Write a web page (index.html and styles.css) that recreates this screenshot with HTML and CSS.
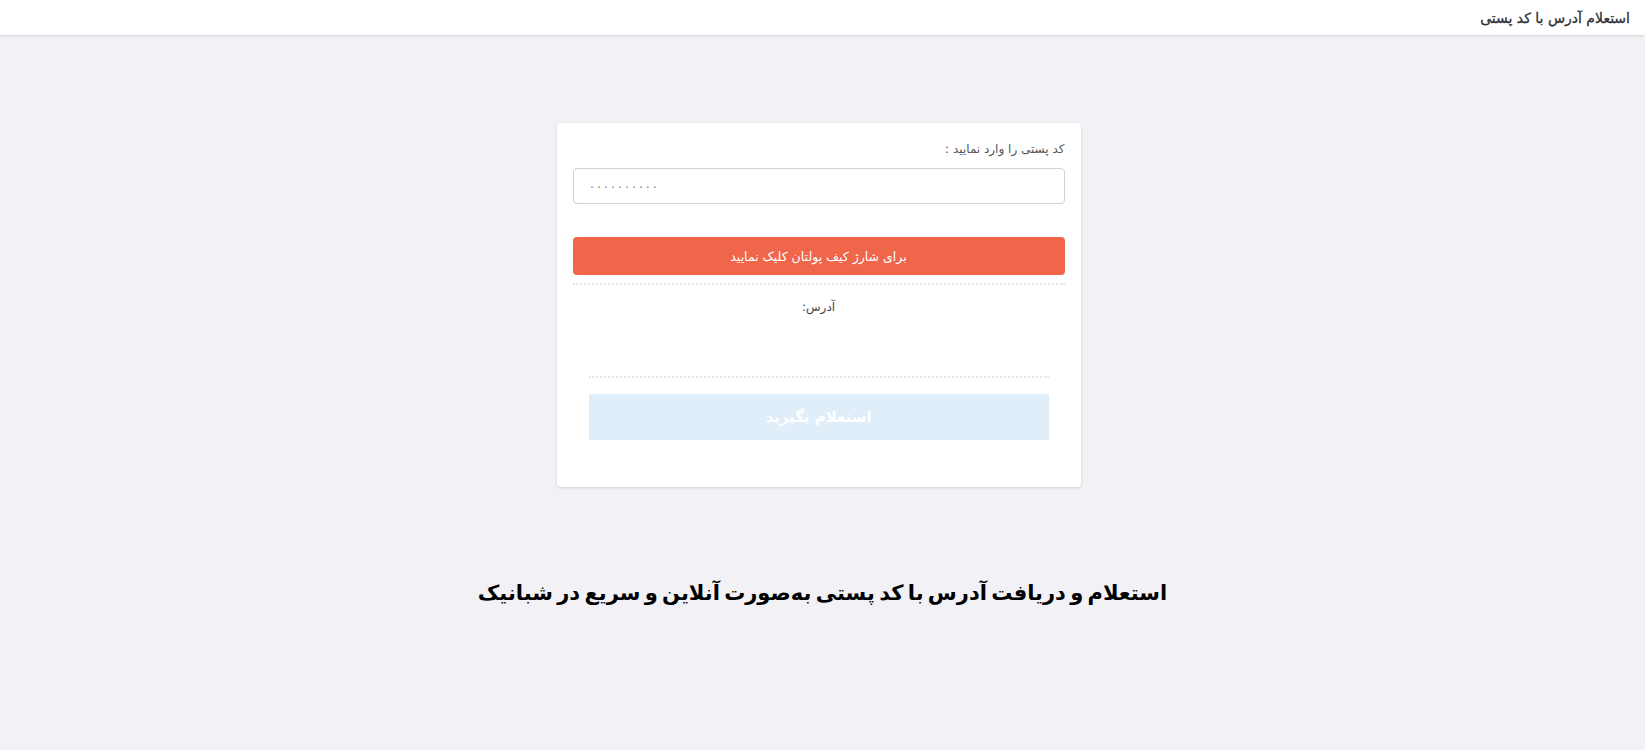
FILE: index.html
```html
<!DOCTYPE html>
<html lang="fa" dir="rtl">
<head>
<meta charset="utf-8">
<title>استعلام آدرس با کد پستی</title>
<link rel="stylesheet" href="styles.css">
</head>
<body>
<header class="topbar">
  <h1 class="topbar-title">استعلام آدرس با کد پستی</h1>
</header>
<main class="page">
  <div class="card-wrap">
    <section class="card">
      <label class="field-label" for="postcode">کد پستی را وارد نمایید :</label>
      <input class="field-input" id="postcode" type="text" placeholder="۰۰۰۰۰۰۰۰۰۰">
      <button class="btn-charge" type="button">برای شارژ کیف پولتان کلیک نمایید</button>
      <div class="result">
        <div class="result-label">آدرس:</div>
        <div class="result-body"></div>
        <div class="result-footer">
          <button class="btn-inquiry" type="button">استعلام بگیرید</button>
        </div>
      </div>
    </section>
  </div>
  <h2 class="page-heading">استعلام و دریافت آدرس با کد پستی به‌صورت آنلاین و سریع در شبانیک</h2>
</main>
</body>
</html>
```
FILE: styles.css
```css
html, body {
  margin: 0;
  padding: 0;
}
body {
  background: #f1f1f6;
  font-family: "DejaVu Sans", "Noto Sans", sans-serif;
  direction: rtl;
  color: #333;
  height: 750px;
  overflow: hidden;
}
.topbar {
  height: 35px;
  background: #ffffff;
  box-shadow: 0 1px 3px rgba(0, 0, 0, 0.12);
  display: flex;
  align-items: center;
  padding: 0 15px;
}
.topbar-title {
  margin: 0;
  font-size: 14px;
  font-weight: normal;
  color: #2f2f35;
  -webkit-text-stroke: 0.3px #2f2f35;
}
.page {
  padding-top: 88px;
}
.card-wrap {
  display: flex;
  justify-content: center;
  padding-right: 8px;
}
.card {
  width: 492px;
  background: #ffffff;
  border-radius: 4px;
  box-shadow: 0 1px 3px rgba(0, 0, 0, 0.14);
  padding: 16px 16px 16px;
  display: flex;
  flex-direction: column;
}
.field-label {
  font-size: 12px;
  line-height: 20px;
  color: #555;
  text-align: right;
}
.field-input {
  margin-top: 9px;
  height: 36px;
  box-sizing: border-box;
  border: 1px solid #cfcfd4;
  border-radius: 4px;
  padding: 0 15px;
  direction: ltr;
  text-align: left;
  font-family: "DejaVu Sans", sans-serif;
  font-size: 13px;
  color: #555;
  outline: none;
}
.field-input::placeholder {
  color: #8a8a90;
  letter-spacing: 1px;
}
.btn-charge {
  margin-top: 33px;
  height: 38px;
  border: none;
  border-radius: 4px;
  background: #ef664a;
  color: #ffffff;
  font-family: inherit;
  font-size: 12.5px;
}
.result {
  margin-top: 8px;
  border-top: 2px dotted #e2e2e8;
  display: flex;
  flex-direction: column;
}
.result-label {
  margin-top: 12px;
  text-align: center;
  font-size: 12px;
  line-height: 20px;
  color: #444;
}
.result-body {
  height: 59px;
}
.result-footer {
  margin: 0 16px;
  padding: 16px 0 31px;
  border-top: 2px dotted #e6e6ec;
}
.btn-inquiry {
  width: 100%;
  height: 46px;
  border: none;
  background: #dfeef9;
  color: #ffffff;
  font-family: inherit;
  font-size: 15px;
  font-weight: bold;
}
.page-heading {
  margin: 94px 0 0;
  text-align: center;
  font-size: 21px;
  word-spacing: -3px;
  font-weight: bold;
  color: #000;
}
```
